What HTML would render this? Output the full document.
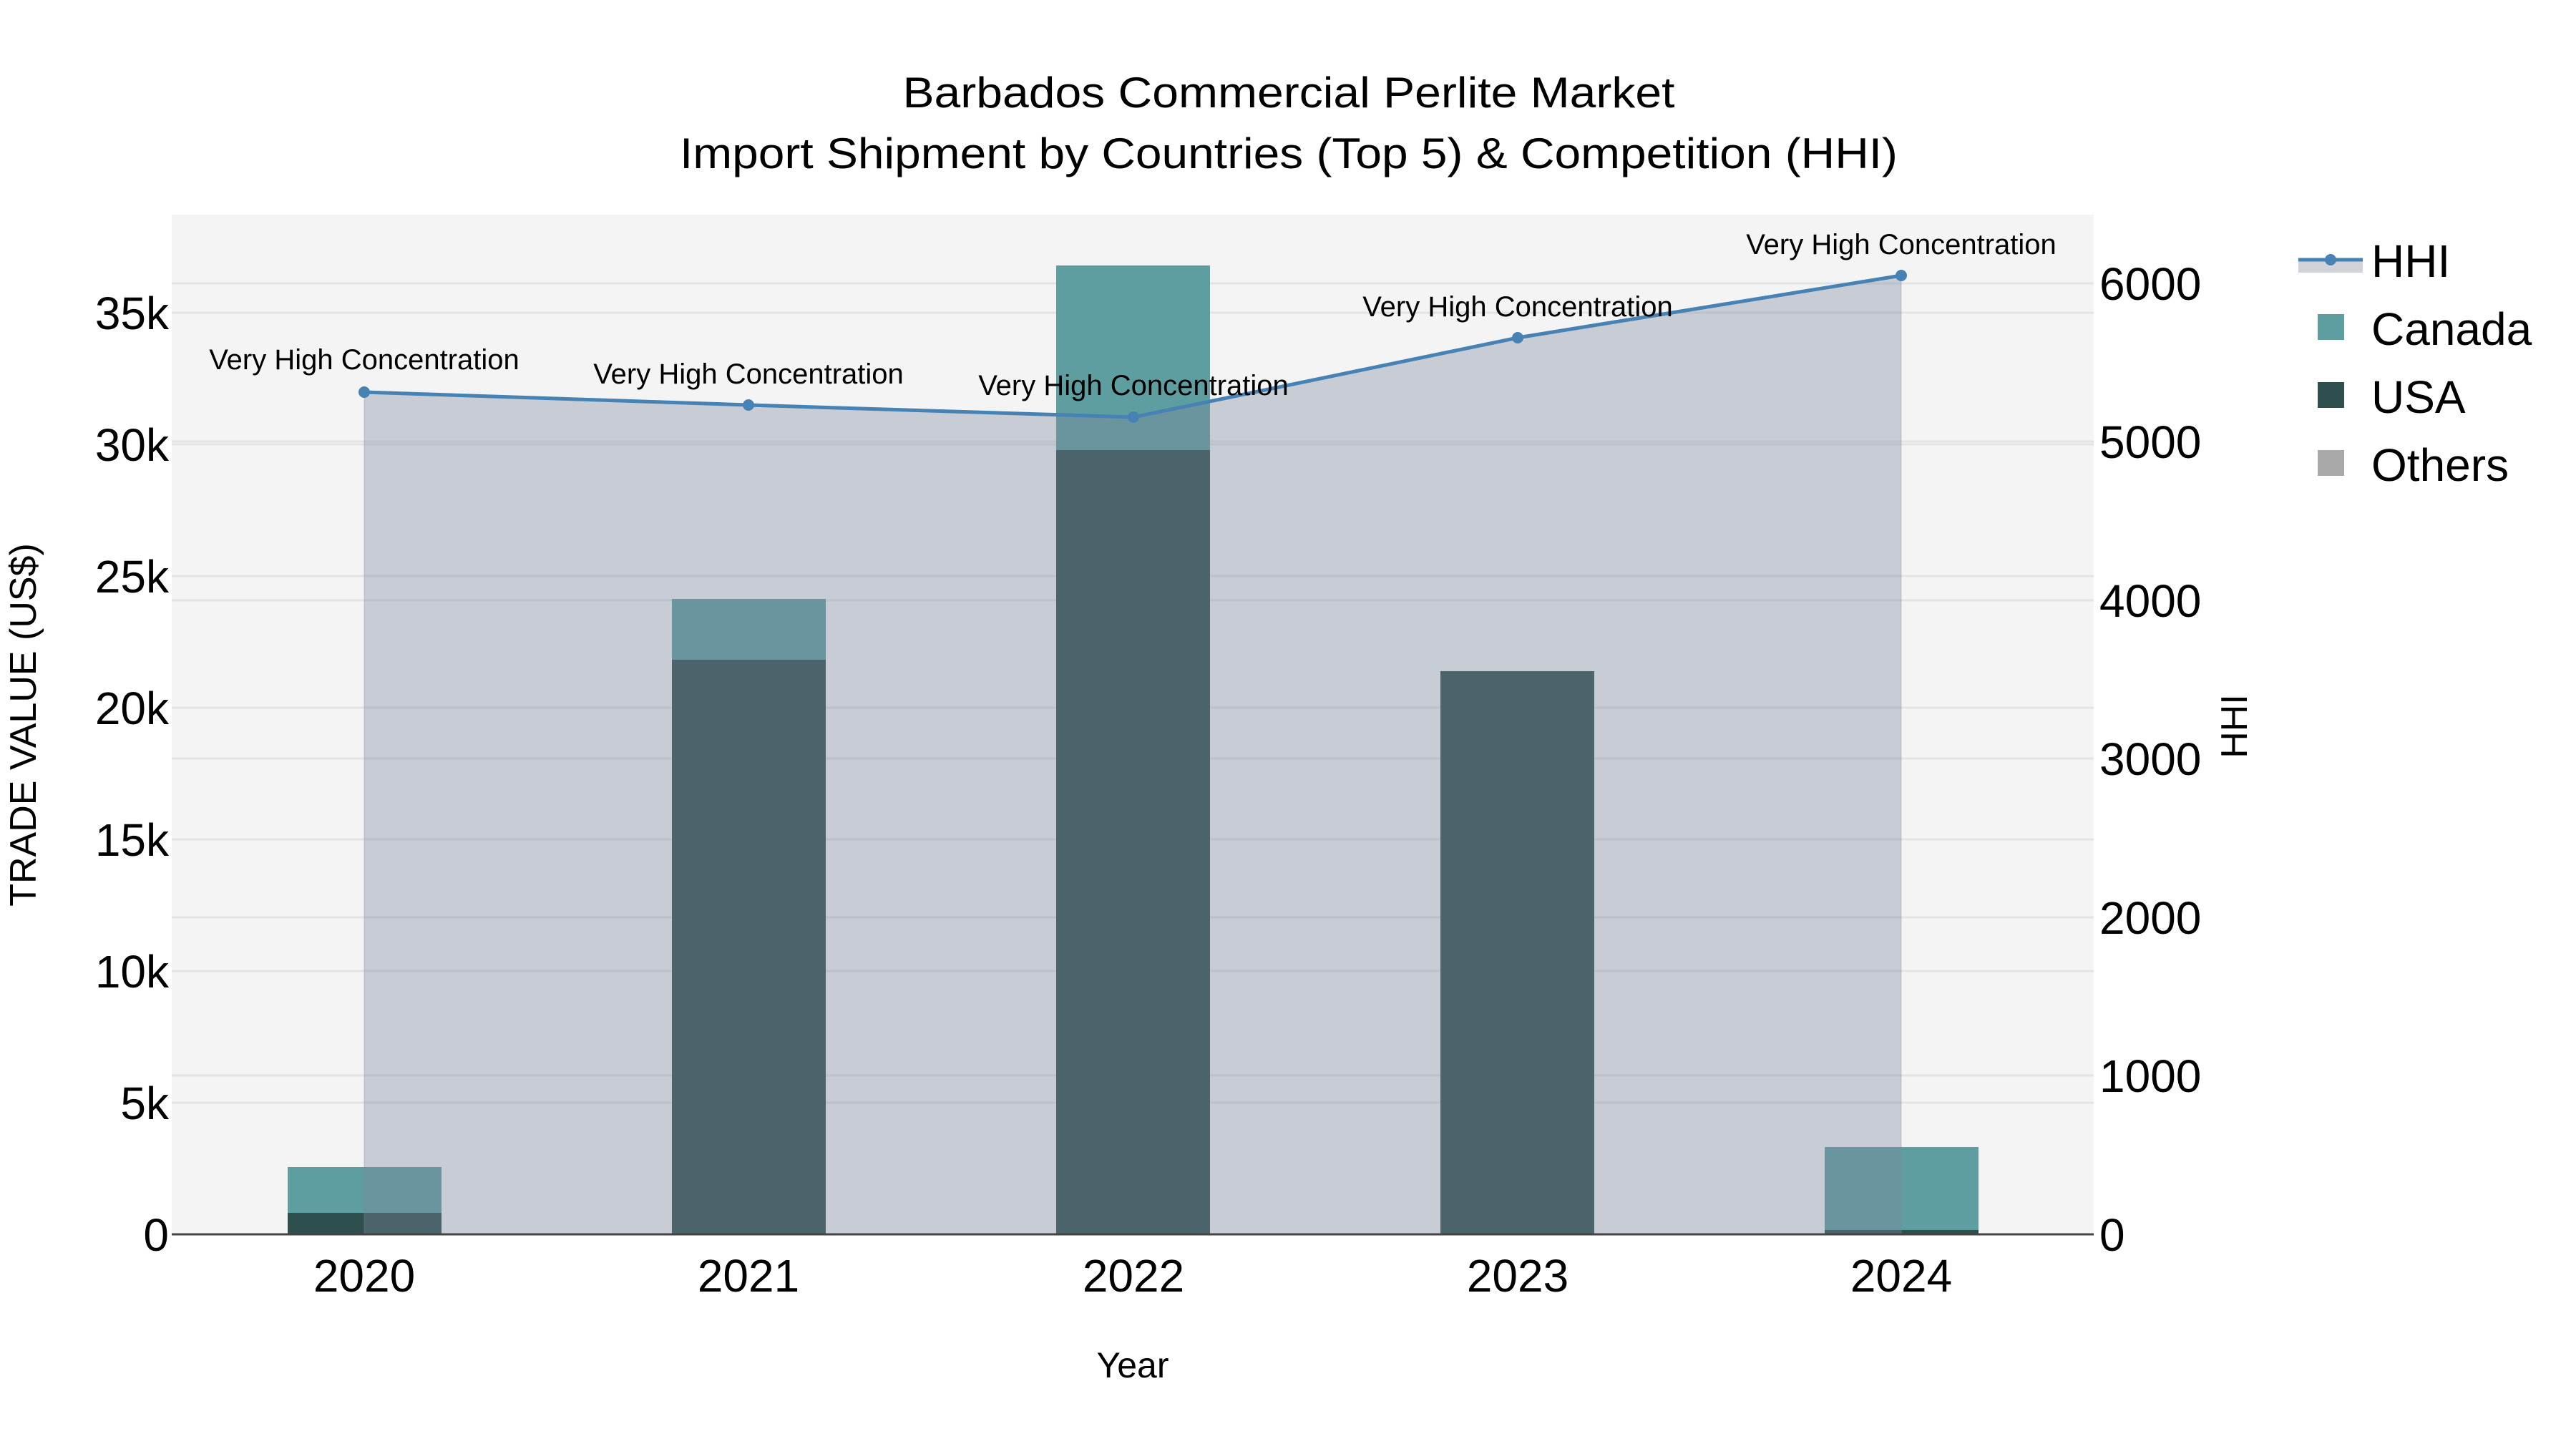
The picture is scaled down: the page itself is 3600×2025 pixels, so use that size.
<!DOCTYPE html>
<html><head><meta charset="utf-8"><style>
html,body{margin:0;padding:0;background:#fff;width:3600px;height:2025px;overflow:hidden}
svg{display:block}
text{font-family:"Liberation Sans",Arial,sans-serif;fill:#000}
</style></head><body>
<svg width="3600" height="2025" viewBox="0 0 3600 2025" xmlns="http://www.w3.org/2000/svg">
<rect x="0" y="0" width="3600" height="2025" fill="#fff"/>
<rect x="240" y="300" width="2686" height="1425" fill="#f4f4f4"/>
<g stroke="#e3e3e3" stroke-width="3">
<line x1="240" x2="2926" y1="1541" y2="1541"/>
<line x1="240" x2="2926" y1="1357" y2="1357"/>
<line x1="240" x2="2926" y1="1173" y2="1173"/>
<line x1="240" x2="2926" y1="989" y2="989"/>
<line x1="240" x2="2926" y1="805" y2="805"/>
<line x1="240" x2="2926" y1="621" y2="621"/>
<line x1="240" x2="2926" y1="437" y2="437"/>
<line x1="240" x2="2926" y1="1503" y2="1503"/>
<line x1="240" x2="2926" y1="1282" y2="1282"/>
<line x1="240" x2="2926" y1="1060" y2="1060"/>
<line x1="240" x2="2926" y1="839" y2="839"/>
<line x1="240" x2="2926" y1="617" y2="617"/>
<line x1="240" x2="2926" y1="396" y2="396"/>
</g>
<g>
<rect x="402" y="1631" width="215" height="94" fill="#5f9ea0"/>
<rect x="402" y="1695" width="215" height="30" fill="#2f4f4f"/>
<rect x="939" y="837" width="215" height="888" fill="#5f9ea0"/>
<rect x="939" y="922" width="215" height="803" fill="#2f4f4f"/>
<rect x="1476" y="371" width="215" height="1354" fill="#5f9ea0"/>
<rect x="1476" y="629" width="215" height="1096" fill="#2f4f4f"/>
<rect x="2013" y="938" width="215" height="787" fill="#2f4f4f"/>
<rect x="2550" y="1603" width="215" height="122" fill="#5f9ea0"/>
<rect x="2550" y="1719" width="215" height="6" fill="#2f4f4f"/>
</g>
<polygon points="509,1725 509,548 1046,566 1584,583 2121,472 2657,385 2657,1725" fill="rgba(125,136,158,0.37)" stroke="rgba(125,136,158,0.2)" stroke-width="2"/>
<line x1="240" x2="2926" y1="1725" y2="1725" stroke="#444" stroke-width="3"/>
<polyline points="509,548 1046,566 1584,583 2121,472 2657,385" fill="none" stroke="#4682b4" stroke-width="5"/>
<g fill="#4682b4">
<circle cx="509" cy="548" r="8"/><circle cx="1046" cy="566" r="8"/><circle cx="1584" cy="583" r="8"/><circle cx="2121" cy="472" r="8"/><circle cx="2657" cy="385" r="8"/>
</g>
<g font-size="40" text-anchor="middle">
<text x="509" y="516">Very High Concentration</text>
<text x="1046" y="536">Very High Concentration</text>
<text x="1584" y="552">Very High Concentration</text>
<text x="2121" y="442">Very High Concentration</text>
<text x="2657" y="355">Very High Concentration</text>
</g>
<text x="1801" y="150" font-size="60" text-anchor="middle" textLength="1079" lengthAdjust="spacingAndGlyphs">Barbados Commercial Perlite Market</text>
<text x="1801" y="235" font-size="60" text-anchor="middle" textLength="1702" lengthAdjust="spacingAndGlyphs">Import Shipment by Countries (Top 5) &amp; Competition (HHI)</text>
<g font-size="64" text-anchor="end">
<text x="236" y="1748">0</text>
<text x="236" y="1564">5k</text>
<text x="236" y="1380">10k</text>
<text x="236" y="1196">15k</text>
<text x="236" y="1012">20k</text>
<text x="236" y="828">25k</text>
<text x="236" y="644">30k</text>
<text x="236" y="460">35k</text>
</g>
<g font-size="64" text-anchor="start">
<text x="2934" y="1748">0</text>
<text x="2934" y="1526">1000</text>
<text x="2934" y="1305">2000</text>
<text x="2934" y="1083">3000</text>
<text x="2934" y="862">4000</text>
<text x="2934" y="640">5000</text>
<text x="2934" y="419">6000</text>
</g>
<g font-size="64" text-anchor="middle">
<text x="509" y="1805">2020</text>
<text x="1046" y="1805">2021</text>
<text x="1584" y="1805">2022</text>
<text x="2121" y="1805">2023</text>
<text x="2657" y="1805">2024</text>
</g>
<text x="1583" y="1925" font-size="50" text-anchor="middle">Year</text>
<text transform="translate(50,1013) rotate(-90)" font-size="52" text-anchor="middle">TRADE VALUE (US$)</text>
<text transform="translate(3140,1015) rotate(-90)" font-size="52" text-anchor="middle">HHI</text>
<rect x="3212" y="363" width="90" height="18" fill="#d0d4da"/>
<line x1="3212" x2="3302" y1="363" y2="363" stroke="#4682b4" stroke-width="5"/>
<circle cx="3257" cy="363" r="8" fill="#4682b4"/>
<rect x="3239" y="439" width="37" height="36" fill="#5f9ea0"/>
<rect x="3239" y="534" width="37" height="36" fill="#2f4f4f"/>
<rect x="3239" y="629" width="37" height="36" fill="#a9a9a9"/>
<g font-size="64">
<text x="3314" y="387">HHI</text>
<text x="3314" y="482">Canada</text>
<text x="3314" y="577">USA</text>
<text x="3314" y="672">Others</text>
</g>
</svg>
</body></html>
